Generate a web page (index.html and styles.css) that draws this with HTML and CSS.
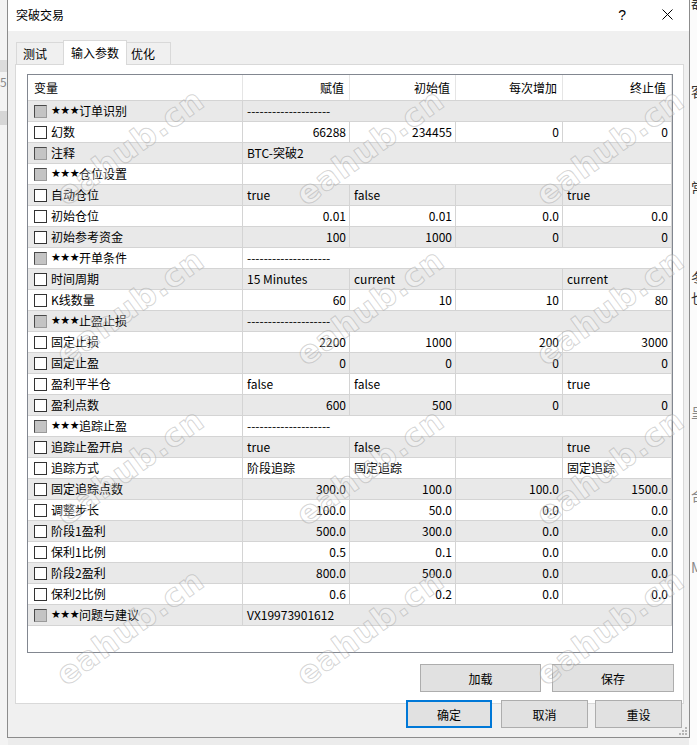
FILE: index.html
```html
<!DOCTYPE html>
<html lang="zh-CN">
<head>
<meta charset="UTF-8">
<title>突破交易</title>
<link rel="stylesheet" href="styles.css">
</head>
<body>
	<div class="app-left">
		<div class="band"></div>
		<div class="num">52</div>
		<div class="band2"></div>
	</div>
	<div class="app-right">
		<span class="g1">器</span>
		<span class="g2">客</span>
		<span class="g3">常</span>
		<span class="g4">冬</span>
		<span class="g5">也</span>
		<span class="g6">呈</span>
		<span class="g7">合</span>
		<span class="g8">M</span>
	</div>

	<div class="dialog">
		<div class="titlebar">
			<span class="title">突破交易</span>
			<span class="help">?</span>
			<svg class="close" width="11" height="11" viewBox="0 0 11 11"><path d="M0.5 0.5 L10.5 10.5 M10.5 0.5 L0.5 10.5" stroke="#000" stroke-width="1" fill="none"/></svg>
		</div>
		<div class="body">
			<div class="tabs">
				<div class="tab t1">测试</div>
				<div class="tab t2 active">输入参数</div>
				<div class="tab t3">优化</div>
			</div>
			<div class="panel">
				<div class="table">
					<div class="row head">
						<div class="c name">变量</div>
						<div class="c r">赋值</div>
						<div class="c r">初始值</div>
						<div class="c r">每次增加</div>
						<div class="c r">终止值</div>
					</div>

					<div class="row alt"><div class="c name"><i class="cb off"></i><span class="st">★★★</span>订单识别</div><div class="c span">--------------------</div></div>
					<div class="row"><div class="c name"><i class="cb"></i>幻数</div><div class="c r">66288</div><div class="c r">234455</div><div class="c r">0</div><div class="c r">0</div></div>
					<div class="row alt"><div class="c name"><i class="cb off"></i>注释</div><div class="c span">BTC-突破2</div></div>
					<div class="row"><div class="c name"><i class="cb off"></i><span class="st">★★★</span>仓位设置</div><div class="c span"></div></div>
					<div class="row alt"><div class="c name"><i class="cb"></i>自动仓位</div><div class="c">true</div><div class="c">false</div><div class="c"></div><div class="c">true</div></div>
					<div class="row"><div class="c name"><i class="cb"></i>初始仓位</div><div class="c r">0.01</div><div class="c r">0.01</div><div class="c r">0.0</div><div class="c r">0.0</div></div>
					<div class="row alt"><div class="c name"><i class="cb"></i>初始参考资金</div><div class="c r">100</div><div class="c r">1000</div><div class="c r">0</div><div class="c r">0</div></div>
					<div class="row"><div class="c name"><i class="cb off"></i><span class="st">★★★</span>开单条件</div><div class="c span">--------------------</div></div>
					<div class="row alt"><div class="c name"><i class="cb"></i>时间周期</div><div class="c">15 Minutes</div><div class="c">current</div><div class="c"></div><div class="c">current</div></div>
					<div class="row"><div class="c name"><i class="cb"></i>K线数量</div><div class="c r">60</div><div class="c r">10</div><div class="c r">10</div><div class="c r">80</div></div>
					<div class="row alt"><div class="c name"><i class="cb off"></i><span class="st">★★★</span>止盈止损</div><div class="c span">--------------------</div></div>
					<div class="row"><div class="c name"><i class="cb"></i>固定止损</div><div class="c r">2200</div><div class="c r">1000</div><div class="c r">200</div><div class="c r">3000</div></div>
					<div class="row alt"><div class="c name"><i class="cb"></i>固定止盈</div><div class="c r">0</div><div class="c r">0</div><div class="c r">0</div><div class="c r">0</div></div>
					<div class="row"><div class="c name"><i class="cb"></i>盈利平半仓</div><div class="c">false</div><div class="c">false</div><div class="c"></div><div class="c">true</div></div>
					<div class="row alt"><div class="c name"><i class="cb"></i>盈利点数</div><div class="c r">600</div><div class="c r">500</div><div class="c r">0</div><div class="c r">0</div></div>
					<div class="row"><div class="c name"><i class="cb off"></i><span class="st">★★★</span>追踪止盈</div><div class="c span">--------------------</div></div>
					<div class="row alt"><div class="c name"><i class="cb"></i>追踪止盈开启</div><div class="c">true</div><div class="c">false</div><div class="c"></div><div class="c">true</div></div>
					<div class="row"><div class="c name"><i class="cb"></i>追踪方式</div><div class="c">阶段追踪</div><div class="c">固定追踪</div><div class="c"></div><div class="c">固定追踪</div></div>
					<div class="row alt"><div class="c name"><i class="cb"></i>固定追踪点数</div><div class="c r">300.0</div><div class="c r">100.0</div><div class="c r">100.0</div><div class="c r">1500.0</div></div>
					<div class="row"><div class="c name"><i class="cb"></i>调整步长</div><div class="c r">100.0</div><div class="c r">50.0</div><div class="c r">0.0</div><div class="c r">0.0</div></div>
					<div class="row alt"><div class="c name"><i class="cb"></i>阶段1盈利</div><div class="c r">500.0</div><div class="c r">300.0</div><div class="c r">0.0</div><div class="c r">0.0</div></div>
					<div class="row"><div class="c name"><i class="cb"></i>保利1比例</div><div class="c r">0.5</div><div class="c r">0.1</div><div class="c r">0.0</div><div class="c r">0.0</div></div>
					<div class="row alt"><div class="c name"><i class="cb"></i>阶段2盈利</div><div class="c r">800.0</div><div class="c r">500.0</div><div class="c r">0.0</div><div class="c r">0.0</div></div>
					<div class="row"><div class="c name"><i class="cb"></i>保利2比例</div><div class="c r">0.6</div><div class="c r">0.2</div><div class="c r">0.0</div><div class="c r">0.0</div></div>
					<div class="row alt"><div class="c name"><i class="cb off"></i><span class="st">★★★</span>问题与建议</div><div class="c span">VX19973901612</div></div>
				</div>
				<div class="btns">
					<div class="btn w1">加载</div>
					<div class="btn w2">保存</div>
				</div>
			</div>
			<div class="btns bottom">
				<div class="btn default">确定</div>
				<div class="btn w3">取消</div>
				<div class="btn w3">重设</div>
			</div>
		</div>
		<svg class="grip" width="8" height="8" viewBox="0 0 8 8" fill="#b5b5b5">
			<rect x="6" y="0" width="2" height="2"/><rect x="3" y="3" width="2" height="2"/><rect x="6" y="3" width="2" height="2"/>
			<rect x="0" y="6" width="2" height="2"/><rect x="3" y="6" width="2" height="2"/><rect x="6" y="6" width="2" height="2"/>
		</svg>
	</div>

	<div class="watermarks">
		<span>eahub.cn</span><span>eahub.cn</span><span>eahub.cn</span>
		<span>eahub.cn</span><span>eahub.cn</span><span>eahub.cn</span>
		<span>eahub.cn</span><span>eahub.cn</span><span>eahub.cn</span>
		<span>eahub.cn</span><span>eahub.cn</span><span>eahub.cn</span>
	</div>
</body>
</html>
```
FILE: styles.css
```css
* {
	box-sizing: border-box;
}
body {
	margin: 0;
	width: 697px;
	height: 745px;
	overflow: hidden;
	position: relative;
	background: #ececec;
	font-family: "Noto Sans CJK SC", "Microsoft YaHei", sans-serif;
	font-size: 12px;
	color: #000;
}

/* window behind the dialog */
.app-left {
	position: absolute;
	left: 0;
	top: 0;
	width: 8px;
	height: 745px;
	background: #f3f3f3;
}
.app-left .band {
	margin-top: 60px;
	height: 12px;
	background: #dcdcdc;
}
.app-left .num {
	margin-top: 4px;
	color: #888;
	font-size: 12px;
	line-height: 12px;
}
.app-left .band2 {
	margin-top: 23px;
	height: 14px;
	background: #d6d6d6;
}
.app-right {
	position: absolute;
	left: 689px;
	top: 0;
	width: 8px;
	height: 745px;
	background: #fbfbfb;
	font-size: 14px;
	line-height: 14px;
	color: #333;
	overflow: hidden;
}
.app-right span {
	position: absolute;
	left: 2px;
}
.app-right .g1 { top: -5px; }
.app-right .g2 { top: 84px; }
.app-right .g3 { top: 180px; }
.app-right .g4 { top: 270px; }
.app-right .g5 { top: 290px; }
.app-right .g6 { top: 405px; color: #888; }
.app-right .g7 { top: 488px; color: #888; }
.app-right .g8 { top: 560px; color: #888; }

/* dialog */
.dialog {
	position: relative;
	margin-left: 7px;
	width: 683px;
	height: 738px;
	border: 1px solid #8c8c8c;
	border-top: none;
	background: #f0f0f0;
	display: flex;
	flex-direction: column;
}
.titlebar {
	height: 31px;
	background: #fff;
	display: flex;
	align-items: center;
	padding-left: 8px;
	flex-shrink: 0;
}
.titlebar .title {
	flex: 1;
	margin-top: -2px;
}
.help {
	font-family: "Liberation Sans", sans-serif;
	font-size: 14px;
	margin-right: 36px;
	margin-top: -2px;
}
.close {
	margin-right: 16px;
	margin-top: -2px;
}

.body {
	flex: 1;
	padding: 9px 5px 0 7px;
}
.tabs {
	display: flex;
	align-items: flex-end;
	height: 24px;
	padding-left: 1px;
	position: relative;
	z-index: 1;
}
.tab {
	height: 22px;
	line-height: 21px;
	border: 1px solid #d9d9d9;
	border-bottom: none;
	background: #f0f0f0;
	padding-left: 6px;
}
.t1 { width: 48px; }
.t2 { width: 64px; margin-left: -1px; padding-left: 7px; }
.t3 { width: 45px; margin-left: -1px; padding-left: 4px; }
.tab.active {
	height: 25px;
	line-height: 23px;
	background: #fff;
	margin-bottom: -1px;
	position: relative;
}

.panel {
	background: #fff;
	border: 1px solid #d9d9d9;
	height: 640px;
	padding: 9px 9px 0 11px;
}
.table {
	width: 646px;
	height: 579px;
	border: 1px solid #828790;
}
.row {
	display: grid;
	grid-template-columns: 215px 107px 106px 107px 109px;
	height: 21px;
	border-bottom: 1px solid #d4d4d4;
}
.row.alt {
	background: #e9e9e9;
}
.row.head {
	height: 26px;
	background: #fff;
}
.c {
	border-right: 1px solid #d4d4d4;
	padding: 0 3px 0 4px;
	line-height: 20px;
	white-space: nowrap;
	overflow: hidden;
}
.head .c {
	border-right-color: #e5e5e5;
	line-height: 25px;
	padding-right: 5px;
}
.head .name {
	padding-left: 7px;
}
.c.r {
	text-align: right;
}
.c.span {
	grid-column: 2 / -1;
}
.c.name {
	display: flex;
	align-items: center;
	padding-left: 6px;
}
.cb {
	width: 13px;
	height: 13px;
	border: 1px solid #333;
	background: #fff;
	margin-right: 4px;
	flex-shrink: 0;
}
.cb.off {
	background: #c4c4c4;
	border-color: #4a4a4a #9a9a9a #9a9a9a #4a4a4a;
}
.st {
	font-family: "DejaVu Sans", sans-serif;
	font-size: 11px;
	letter-spacing: -0.5px;
}

.btns {
	display: flex;
	justify-content: flex-end;
	gap: 11px;
	margin-top: 11px;
}
.btn {
	height: 28px;
	background: #e1e1e1;
	border: 1px solid #adadad;
	display: flex;
	align-items: center;
	justify-content: center;
}
.w1 { width: 121px; }
.w2 { width: 122px; }
.w3 { width: 87px; }
.btns.bottom {
	margin-top: -4px;
	margin-right: 2px;
	gap: 9px;
}
.btns.bottom .btn:last-child {
	margin-left: -2px;
}
.btn.default {
	width: 86px;
	border: 2px solid #0078d7;
}
.grip {
	position: absolute;
	right: 2px;
	bottom: 2px;
}

/* eahub watermark over the screenshot */
.watermarks {
	position: absolute;
	left: 10px;
	top: 67px;
	display: grid;
	grid-template-columns: repeat(3, 240px);
	grid-auto-rows: 160px;
	pointer-events: none;
}
.watermarks span {
	display: flex;
	align-items: center;
	justify-content: center;
	font-family: "DejaVu Sans", sans-serif;
	font-weight: bold;
	font-size: 32px;
	color: rgba(255, 255, 255, 0.3);
	-webkit-text-stroke: 1px rgba(150, 150, 150, 0.4);
	transform: rotate(-36deg);
	letter-spacing: 1px;
}
```
